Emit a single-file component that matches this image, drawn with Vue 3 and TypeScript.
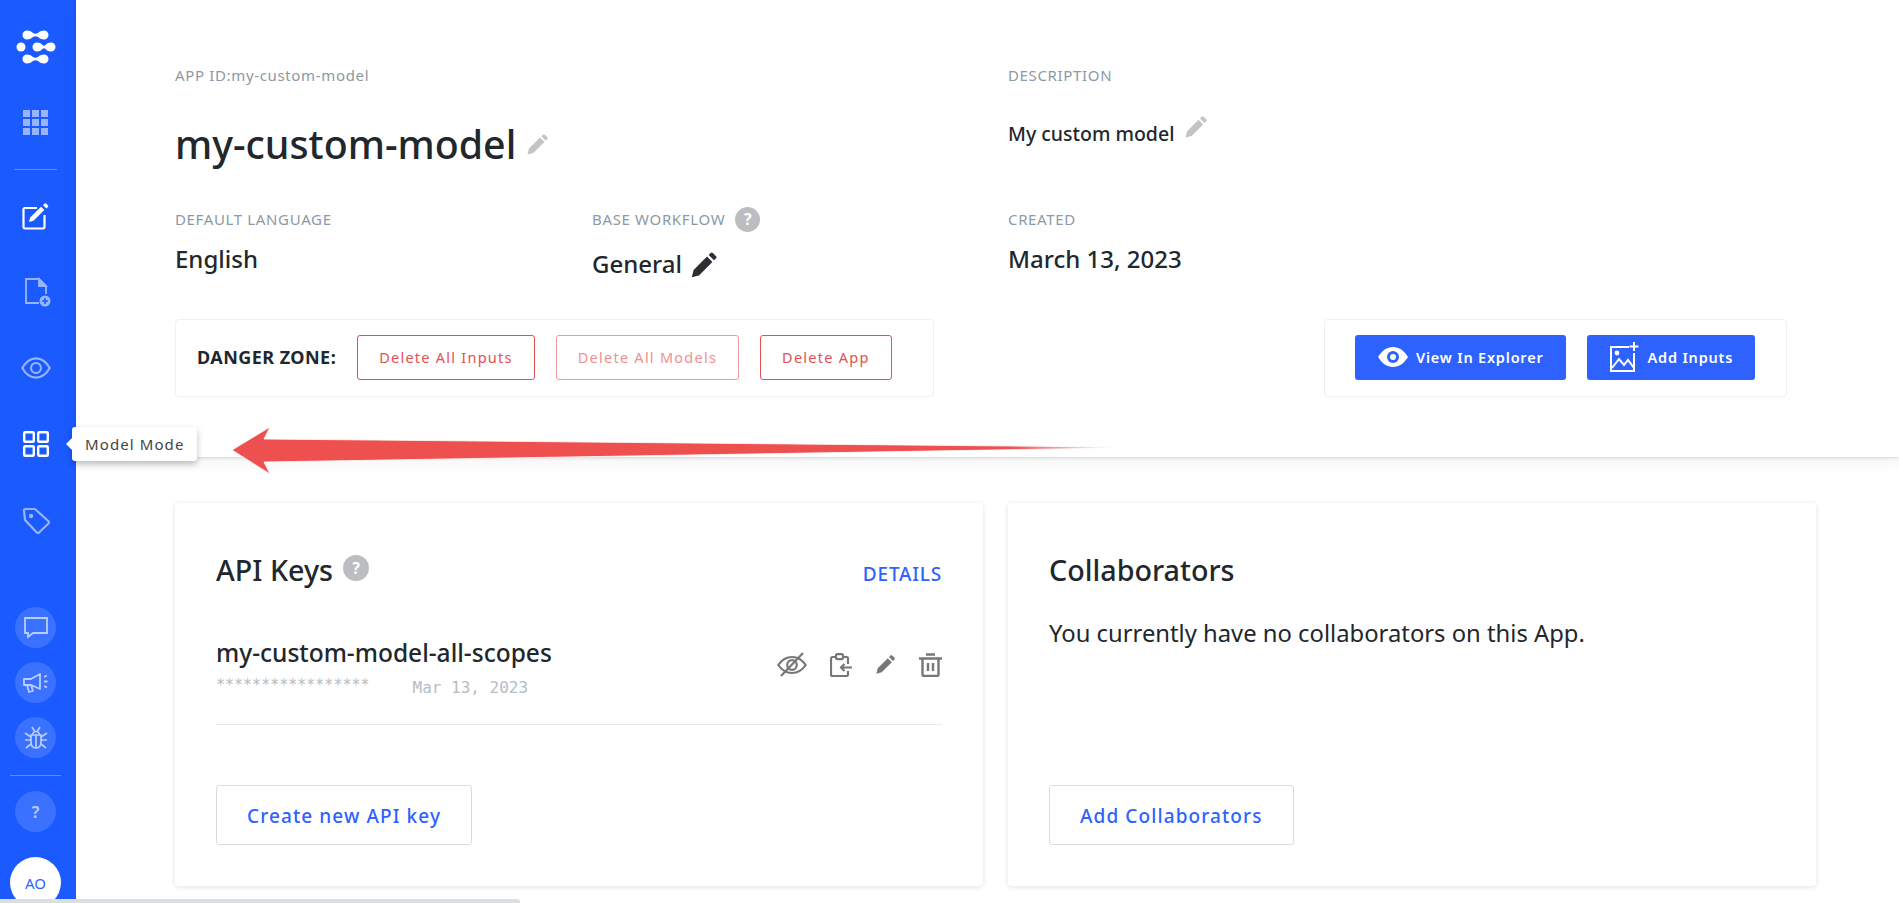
<script setup lang="ts">
const pencil =
  "M1.5 22.5l1.6-6.2L14.6 4.8l4.6 4.6L7.7 20.9zM16 3.4l1.7-1.7a1.3 1.3 0 0 1 1.9 0l2.7 2.7a1.3 1.3 0 0 1 0 1.9L20.6 8z";
const dangerButtons = [
  { label: "Delete All Inputs", muted: false },
  { label: "Delete All Models", muted: true },
  { label: "Delete App", muted: false },
];

// logo bar: two round ends joined by a thin waist
function dumbbell(a: number, b: number, y: number) {
  const m = (a + b) / 2;
  return (
    `M${a} ${y - 4.5}C${a + 5} ${y - 4.5} ${a + 5} ${y - 1.3} ${m} ${y - 1.3}` +
    `C${b - 5} ${y - 1.3} ${b - 5} ${y - 4.5} ${b} ${y - 4.5}` +
    `A4.5 4.5 0 0 1 ${b} ${y + 4.5}` +
    `C${b - 5} ${y + 4.5} ${b - 5} ${y + 1.3} ${m} ${y + 1.3}` +
    `C${a + 5} ${y + 1.3} ${a + 5} ${y + 4.5} ${a} ${y + 4.5}` +
    `A4.5 4.5 0 0 1 ${a} ${y - 4.5}z`
  );
}
const logoBars = [dumbbell(11, 28, 5), dumbbell(21, 35, 17), dumbbell(11, 28, 29)];
</script>

<template>
  <div class="page">
    <aside class="sidebar">
      <div class="logo">
        <svg width="40" height="34" viewBox="0 0 40 34" fill="#fff">
          <path v-for="d in logoBars" :key="d" :d="d" />
          <circle cx="5" cy="17" r="4.5" />
        </svg>
      </div>
      <div class="nav-apps">
        <svg class="dim" width="25" height="25" viewBox="0 0 25 25" fill="#fff">
          <rect x="0" y="0" width="7" height="7" /><rect x="9" y="0" width="7" height="7" /><rect x="18" y="0" width="7" height="7" />
          <rect x="0" y="9" width="7" height="7" /><rect x="9" y="9" width="7" height="7" /><rect x="18" y="9" width="7" height="7" />
          <rect x="0" y="18" width="7" height="7" /><rect x="9" y="18" width="7" height="7" /><rect x="18" y="18" width="7" height="7" />
        </svg>
      </div>
      <div class="rule short"></div>
      <div class="nav-item first">
        <svg width="28" height="28" viewBox="0 0 28 28" fill="none" stroke="#fff" stroke-width="2.2" stroke-linejoin="round">
          <path d="M15 6H3a1.500 1.500 0 0 0-1.500 1.500V25A1.500 1.500 0 0 0 3 26.500h18a1.500 1.500 0 0 0 1.500-1.500V13" />
          <path d="M7 20l1.200-4.500L19 4.800l3.300 3.300-10.800 10.700z" fill="#fff" stroke="none" />
          <path d="M21 3.300l1.700-1.700a1 1 0 0 1 1.400 0l1.900 1.900a1 1 0 0 1 0 1.400L24.300 6.600z" fill="#fff" stroke="none" />
        </svg>
      </div>
      <div class="nav-item">
        <svg class="dim doc" width="28" height="31" viewBox="0 0 28 31" fill="none" stroke="#fff" stroke-width="1.800">
          <path d="M15 26H2V2h13l7 7v8" />
          <path d="M15 2v7h7z" fill="#fff" />
          <circle cx="21" cy="24" r="5.500" fill="#fff" stroke="none" />
          <path d="M21 21v6M18 24h6" stroke="#1a5aff" stroke-width="1.600" />
        </svg>
      </div>
      <div class="nav-item">
        <svg class="dim" width="30" height="22" viewBox="0 0 30 22" fill="none" stroke="#fff" stroke-width="2.200">
          <path d="M1.300 11C5 4.500 9.500 1.300 15 1.300S25 4.500 28.700 11C25 17.500 20.500 20.700 15 20.700S5 17.500 1.300 11z" />
          <circle cx="15" cy="11" r="5" />
        </svg>
      </div>
      <div class="nav-item">
        <svg width="26" height="26" viewBox="0 0 26 26" fill="none" stroke="#fff" stroke-width="2.400">
          <rect x="1.200" y="1.200" width="9.600" height="9.600" rx="1" /><rect x="15.200" y="1.200" width="9.600" height="9.600" rx="1" />
          <rect x="1.200" y="15.200" width="9.600" height="9.600" rx="1" /><rect x="15.200" y="15.200" width="9.600" height="9.600" rx="1" />
        </svg>
      </div>
      <div class="nav-item">
        <svg class="dim" width="28" height="27" viewBox="0 0 28 27" fill="none" stroke="#fff" stroke-width="2.200" stroke-linejoin="round">
          <path d="M2 3.500A1.500 1.500 0 0 1 3.500 2H13l13.500 12.300a1.500 1.500 0 0 1 0 2.200L17 25.500a1.500 1.500 0 0 1-2.200 0L3 13z" />
          <circle cx="9" cy="9" r="2.200" fill="#fff" stroke="none" />
        </svg>
      </div>

      <div class="round round-chat">
        <svg width="24" height="22" viewBox="0 0 24 22" fill="none" stroke="#fff" stroke-width="1.800">
          <path d="M1 1h22v15H9l-5 4v-4H1z" />
        </svg>
      </div>
      <div class="round">
        <svg width="26" height="22" viewBox="0 0 26 22" fill="none" stroke="#fff" stroke-width="1.800" stroke-linejoin="round">
          <path d="M1 7h7l9-5v15l-9-4H1zM4 13l2 7 4-1-2-6" />
          <path d="M21 5l3-1.500M21 9.500h3.500M21 14l3 1.500" />
        </svg>
      </div>
      <div class="round">
        <svg width="24" height="24" viewBox="0 0 24 24" fill="none" stroke="#fff" stroke-width="1.700">
          <path d="M7 9h10v8a5 5 0 0 1-10 0zM8.500 9a3.500 3.500 0 0 1 7 0M12 9v13M8 1l2.500 4M16 1l-2.500 4" />
          <path d="M1 7l6 4M23 7l-6 4M1 14h6M23 14h-6M2 22l5-4M22 22l-5-4" />
        </svg>
      </div>
      <div class="rule wide"></div>
      <div class="round help">?</div>
      <div class="avatar">AO</div>
    </aside>

    <main class="main">
      <section class="summary">
        <div class="meta">
          <div class="meta-wide">
            <div class="label">APP ID:my-custom-model</div>
            <h1 class="title">
              my-custom-model
              <svg width="23" height="23" viewBox="0 0 24 24" fill="#c4c4c4"><path :d="pencil" /></svg>
            </h1>
          </div>
          <div>
            <div class="label">DESCRIPTION</div>
            <div class="desc">
              <span>My custom model</span>
              <svg class="edit-desc" width="24" height="24" viewBox="0 0 24 24" fill="#c4c4c4"><path :d="pencil" /></svg>
            </div>
          </div>
          <div>
            <div class="label">DEFAULT LANGUAGE</div>
            <div class="value">English</div>
          </div>
          <div>
            <div class="label">
              BASE WORKFLOW
              <span class="q">?</span>
            </div>
            <div class="value workflow">
              General
              <svg width="28" height="28" viewBox="0 0 24 24" fill="#2b2f33"><path :d="pencil" /></svg>
            </div>
          </div>
          <div>
            <div class="label">CREATED</div>
            <div class="value">March 13, 2023</div>
          </div>
        </div>

        <div class="toolbars">
          <div class="toolbar danger">
            <strong>DANGER ZONE:</strong>
            <button
              v-for="b in dangerButtons"
              :key="b.label"
              class="btn-danger"
              :class="{ muted: b.muted }"
            >
              {{ b.label }}
            </button>
          </div>
          <div class="toolbar actions">
            <button class="btn-primary">
              <svg width="30" height="20" viewBox="0 0 30 20">
                <path d="M0 10C4 3.500 9 0 15 0s11 3.500 15 10c-4 6.500-9 10-15 10S4 16.500 0 10z" fill="#fff" />
                <circle cx="15" cy="10" r="6" fill="#2e62ff" />
                <circle cx="15" cy="10" r="3" fill="#fff" />
              </svg>
              View In Explorer
            </button>
            <button class="btn-primary">
              <svg width="30" height="30" viewBox="0 0 30 30" fill="none" stroke="#fff" stroke-width="2">
                <path d="M19 5H1v24h23V11" />
                <path d="M24 0v9M19.500 4.500h9" />
                <circle cx="7" cy="11" r="2.400" fill="#fff" stroke="none" />
                <path d="M2 26l7-9 5 6 4-5 6 8" />
              </svg>
              Add Inputs
            </button>
          </div>
        </div>
      </section>

      <section class="cards">
        <article class="card">
          <div class="card-head">
            <h2>API Keys</h2>
            <span class="q big">?</span>
            <a class="details">DETAILS</a>
          </div>
          <div class="key-row">
            <div>
              <div class="key-name">my-custom-model-all-scopes</div>
              <div class="key-meta">
                <span class="stars">*****************</span>
                <span class="date">Mar 13, 2023</span>
              </div>
            </div>
            <div class="key-icons">
              <svg width="30" height="25" viewBox="0 0 30 25" fill="none" stroke="#777" stroke-width="2.200">
                <path d="M1.300 13C5 7.500 9.500 5 15 5s10 2.500 13.700 8C25 18.500 20.500 21 15 21S5 18.500 1.300 13z" />
                <circle cx="15" cy="13" r="4.800" />
                <path d="M4 24L26 1" />
              </svg>
              <svg width="22" height="24" viewBox="0 0 22 24" fill="none" stroke="#777" stroke-width="2.200">
                <path d="M6 4H2.500A1.500 1.500 0 0 0 1 5.500v16A1.500 1.500 0 0 0 2.500 23h14a1.500 1.500 0 0 0 1.500-1.500V18M18 11V5.500A1.500 1.500 0 0 0 16.500 4H13" />
                <rect x="6" y="1.100" width="7" height="5" rx="1.500" />
                <path d="M22 14.500H11M14.500 11L11 14.500l3.500 3.500" />
              </svg>
              <svg width="21" height="21" viewBox="0 0 24 24" fill="#777"><path :d="pencil" /></svg>
              <svg width="23" height="24" viewBox="0 0 23 24" fill="none" stroke="#777" stroke-width="2.400">
                <path d="M0 5.500h23M7 1.500h9" />
                <path d="M3.500 5.500v16a1.500 1.500 0 0 0 1.500 1.500h13a1.500 1.500 0 0 0 1.500-1.500v-16M9 10v8M14 10v8" />
              </svg>
            </div>
          </div>
          <button class="btn-outline">Create new API key</button>
        </article>

        <article class="card">
          <div class="card-head">
            <h2>Collaborators</h2>
          </div>
          <p class="empty">You currently have no collaborators on this App.</p>
          <button class="btn-outline">Add Collaborators</button>
        </article>
      </section>
    </main>

    <!-- overlays -->
    <div class="tooltip">Model Mode</div>
    <svg class="arrow" width="900" height="50" viewBox="0 0 900 50">
      <defs>
        <linearGradient id="tail" x1="0" x2="1" y1="0" y2="0">
          <stop offset="0" stop-color="#ee5050" />
          <stop offset="0.88" stop-color="#ee5050" />
          <stop offset="1" stop-color="#ee5050" stop-opacity="0" />
        </linearGradient>
      </defs>
      <path
        d="M2 25L40 2l-6 12L886 22v1L34 37l6 12z"
        fill="url(#tail)"
        stroke="#fff"
        stroke-opacity="0.8"
        stroke-width="1"
      />
    </svg>
    <div class="scrollbar"></div>
  </div>
</template>

<style scoped>
.page {
  position: relative;
  display: flex;
  width: 1899px;
  height: 903px;
  overflow: hidden;
  background: #fff;
  color: #22272c;
  font-family: "Noto Sans", "Open Sans", sans-serif;
}

.sidebar {
  flex: 0 0 76px;
  box-sizing: border-box;
  height: 903px;
  padding-right: 5px;
  display: flex;
  flex-direction: column;
  align-items: center;
  background: #1a5aff;
  overflow: hidden;
}

.sidebar > * {
  flex: none;
}

.dim {
  opacity: 0.55;
}

.doc {
  margin-left: 4px;
}

.logo {
  display: flex;
  align-items: center;
  justify-content: center;
  height: 34px;
  margin-top: 30px;
}

.nav-apps {
  display: flex;
  margin-top: 46px;
}

.rule {
  height: 1px;
  background: rgba(255, 255, 255, 0.3);
}

.rule.short {
  width: 43px;
  margin-top: 34px;
}

.rule.wide {
  width: 51px;
  margin-top: 17px;
}

.nav-item {
  display: flex;
  align-items: center;
  justify-content: center;
  width: 100%;
  height: 76px;
}

.nav-item.first {
  margin-top: 8px;
}

.round {
  display: flex;
  align-items: center;
  justify-content: center;
  width: 41px;
  height: 41px;
  margin-top: 14px;
  border-radius: 50%;
  background: rgba(255, 255, 255, 0.14);
}

.round svg {
  opacity: 0.65;
}

.round-chat {
  margin-top: 49px;
}

.rule.wide + .round {
  margin-top: 15px;
}

.help {
  color: rgba(255, 255, 255, 0.65);
  font-size: 16px;
  font-weight: 700;
}

.avatar {
  display: flex;
  align-items: center;
  justify-content: center;
  width: 51px;
  height: 51px;
  margin-top: 25px;
  border-radius: 50%;
  background: #fff;
  color: #2e62ff;
  font-size: 15px;
}

.main {
  flex: 1;
  min-width: 0;
}

.summary {
  padding: 62px 112px 60px 99px;
  height: 457px;
  box-sizing: border-box;
  box-shadow: 0 1px 3px rgba(30, 40, 50, 0.16), 0 6px 16px rgba(30, 40, 50, 0.05);
  position: relative;
}

.meta {
  display: grid;
  grid-template-columns: 417px 416px 1fr;
  row-gap: 27px;
  height: 212px;
}

.meta-wide {
  grid-column: span 2;
}

.label {
  display: flex;
  align-items: center;
  gap: 10px;
  height: 26px;
  color: #8c99a6;
  font-size: 15px;
  letter-spacing: 0.65px;
  white-space: nowrap;
}

.title {
  display: flex;
  align-items: center;
  gap: 10px;
  height: 70px;
  margin: 21px 0 0;
  font-size: 39.3px;
  font-weight: 500;
  line-height: 70px;
}

.desc {
  display: flex;
  align-items: flex-start;
  gap: 10px;
  height: 30px;
  margin-top: 31px;
  font-size: 19.5px;
  font-weight: 500;
  line-height: 30px;
}

.edit-desc {
  margin-top: -4px;
}

.value {
  margin-top: 12px;
  font-size: 24px;
  font-weight: 500;
  line-height: 30px;
}

.workflow {
  display: flex;
  align-items: center;
  gap: 8px;
  margin-top: 16px;
}

.workflow svg {
  margin-top: 3px;
}

.q {
  display: inline-flex;
  align-items: center;
  justify-content: center;
  width: 25px;
  height: 25px;
  border-radius: 50%;
  background: #bbbdc0;
  color: #fff;
  font-size: 16px;
  font-weight: 700;
  letter-spacing: 0;
}

.q.big {
  width: 26px;
  height: 26px;
  margin-top: -4px;
}

.toolbars {
  display: flex;
  justify-content: space-between;
  margin-top: 45px;
}

.toolbar {
  display: flex;
  align-items: center;
  box-sizing: border-box;
  height: 78px;
  padding-bottom: 2px;
  border: 1px solid #eff0f1;
  border-radius: 4px;
}

.danger {
  width: 759px;
  padding-left: 21px;
  gap: 21px;
}

.danger strong {
  font-size: 18px;
  font-weight: 700;
  letter-spacing: 0.45px;
  white-space: nowrap;
}

.actions {
  width: 463px;
  padding-left: 30px;
  gap: 21px;
}

button {
  font-family: inherit;
  cursor: pointer;
}

.btn-danger {
  height: 45px;
  padding: 0 21px;
  border: 1px solid #e25050;
  border-radius: 3px;
  background: #fff;
  color: #e25050;
  font-size: 14.5px;
  font-weight: 400;
  letter-spacing: 1.25px;
  white-space: nowrap;
}

.btn-danger.muted {
  border-color: #f19a9a;
  color: #f19090;
}

.btn-primary {
  display: flex;
  align-items: center;
  gap: 8px;
  height: 45px;
  padding: 0 22px 0 23px;
  border: 0;
  border-radius: 3px;
  background: #2e62ff;
  color: #fff;
  font-size: 14.5px;
  font-weight: 600;
  letter-spacing: 0.8px;
  white-space: nowrap;
}

.cards {
  display: grid;
  grid-template-columns: 808px 808px;
  gap: 25px;
  margin: 46px 0 0 99px;
}

.card {
  display: flex;
  flex-direction: column;
  box-sizing: border-box;
  height: 383px;
  padding: 47px 41px 41px;
  border-radius: 4px;
  box-shadow: 0 1px 5px rgba(30, 40, 50, 0.14);
}

.card-head {
  display: flex;
  align-items: center;
  gap: 10px;
  height: 40px;
}

.card-head h2 {
  margin: 0;
  font-size: 28.7px;
  font-weight: 500;
  line-height: 40px;
}

.details {
  margin-left: auto;
  padding-top: 7px;
  color: #2e62ff;
  font-size: 19px;
  font-weight: 500;
  letter-spacing: 0.8px;
}

.key-row {
  display: flex;
  justify-content: space-between;
  height: 86px;
  margin-top: 48px;
  border-bottom: 1px solid #e6e8eb;
}

.key-name {
  font-size: 24.5px;
  font-weight: 500;
  line-height: 30px;
}

.key-meta {
  display: flex;
  gap: 43px;
  margin-top: 6px;
  color: #b5bcc4;
  font-family: "DejaVu Sans Mono", "Liberation Mono", monospace;
  line-height: 22px;
}

.stars {
  font-size: 15px;
}

.date {
  padding-top: 3px;
  font-size: 16px;
}

.key-icons {
  display: flex;
  align-items: center;
  gap: 23px;
  height: 25px;
  margin-top: 14px;
}

.empty {
  margin: 26px 0 0;
  font-size: 23.8px;
  line-height: 34px;
}

.btn-outline {
  align-self: flex-start;
  height: 60px;
  margin-top: auto;
  padding: 2px 30px 0;
  border: 1px solid #d9dcdf;
  border-radius: 3px;
  background: #fff;
  color: #2e62ff;
  font-size: 19px;
  font-weight: 500;
  letter-spacing: 1.1px;
  white-space: nowrap;
}

.tooltip {
  position: absolute;
  left: 72px;
  top: 427px;
  display: flex;
  align-items: center;
  box-sizing: border-box;
  width: 125px;
  height: 34px;
  padding-left: 13px;
  border-radius: 3px;
  background: #fff;
  box-shadow: 0 3px 6px rgba(0, 0, 0, 0.25);
  color: #444;
  font-size: 15px;
  letter-spacing: 1.1px;
}

.tooltip::before {
  content: "";
  position: absolute;
  left: -6px;
  top: 11px;
  border-style: solid;
  border-width: 6px 6px 6px 0;
  border-color: transparent #fff transparent transparent;
}

.arrow {
  position: absolute;
  left: 230px;
  top: 425px;
}

.scrollbar {
  position: absolute;
  left: 0;
  bottom: 0;
  width: 520px;
  height: 4px;
  border-radius: 0 3px 0 0;
  background: #dcdee0;
}
</style>
